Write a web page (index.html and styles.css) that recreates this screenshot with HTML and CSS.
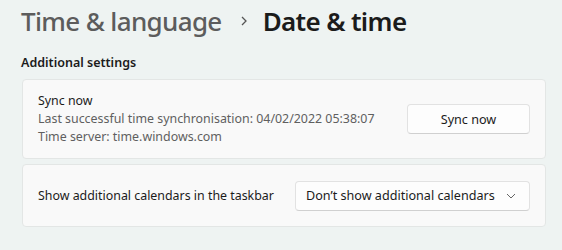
FILE: index.html
```html
<!DOCTYPE html>
<html>
<head>
<meta charset="utf-8">
<link rel="stylesheet" href="styles.css">
</head>
<body>
<div class="page">
  <h1 class="title"><span class="crumb">Time &amp; language</span><span class="sep"><svg width="8" height="12" viewBox="0 0 8 12"><path d="M2 2 L6 6 L2 10" fill="none" stroke="#555" stroke-width="1.3"/></svg></span><span class="current">Date &amp; time</span></h1>
  <h2 class="section">Additional settings</h2>
  <div class="cards">
    <div class="card card-sync">
      <div class="info">
        <div class="label">Sync now</div>
        <div class="sub">Last successful time synchronisation: 04/02/2022 05:38:07</div>
        <div class="sub">Time server: time.windows.com</div>
      </div>
      <button class="btn">Sync now</button>
    </div>
    <div class="card card-cal">
      <div class="label">Show additional calendars in the taskbar</div>
      <div class="select"><span>Don’t show additional calendars</span><svg width="10" height="6" viewBox="0 0 10 6"><path d="M1 1 L5 5 L9 1" fill="none" stroke="#666" stroke-width="1"/></svg></div>
    </div>
  </div>
</div>
</body>
</html>
```
FILE: styles.css
```css
html, body {
  margin: 0;
  padding: 0;
  background: #eef3f2;
  font-family: "Noto Sans", "Open Sans", sans-serif;
  color: #1b1b1b;
}
.page {
  padding: 0 16px 0 21px;
}
.title {
  margin: 0;
  padding-top: 2px;
  height: 38px;
  display: flex;
  align-items: center;
  font-size: 26px;
  font-weight: 600;
  line-height: 38px;
  letter-spacing: -0.65px;
}
.crumb {
  color: #5c5c5c;
  font-weight: 500;
}
.sep {
  display: flex;
  align-items: center;
  margin: 0 15px 0 18px;
}
.current {
  color: #1b1b1b;
}
.section {
  margin: 14px 0 0 0;
  font-size: 12.5px;
  font-weight: 600;
  line-height: 18px;
  height: 25px;
}
.cards {
  display: flex;
  flex-direction: column;
  gap: 5px;
  width: 524px;
  margin-left: 1px;
}
.card {
  box-sizing: border-box;
  background: #f9f9f9;
  border: 1px solid #e3e6e5;
  border-radius: 4px;
  display: flex;
  align-items: center;
  justify-content: space-between;
  padding: 0 15px 0 15px;
}
.card-sync { height: 80px; }
.card-cal { height: 63px; }
.label {
  font-size: 12.4px;
  line-height: 18px;
  color: #1b1b1b;
}
.sub {
  font-size: 12.4px;
  line-height: 18px;
  color: #5f5f5f;
}
.btn {
  box-sizing: border-box;
  width: 123px;
  height: 30px;
  background: #fdfdfd;
  border: 1px solid #e2e2e2;
  border-bottom-color: #d0d0d0;
  border-radius: 4px;
  font-family: inherit;
  font-size: 12.6px;
  color: #1b1b1b;
  padding: 0;
}
.select {
  box-sizing: border-box;
  width: 235px;
  height: 30px;
  background: #fdfdfd;
  border: 1px solid #e2e2e2;
  border-bottom-color: #d0d0d0;
  border-radius: 4px;
  display: flex;
  align-items: center;
  justify-content: space-between;
  padding: 0 13px 0 10px;
  font-size: 12.6px;
  color: #1b1b1b;
}
```
